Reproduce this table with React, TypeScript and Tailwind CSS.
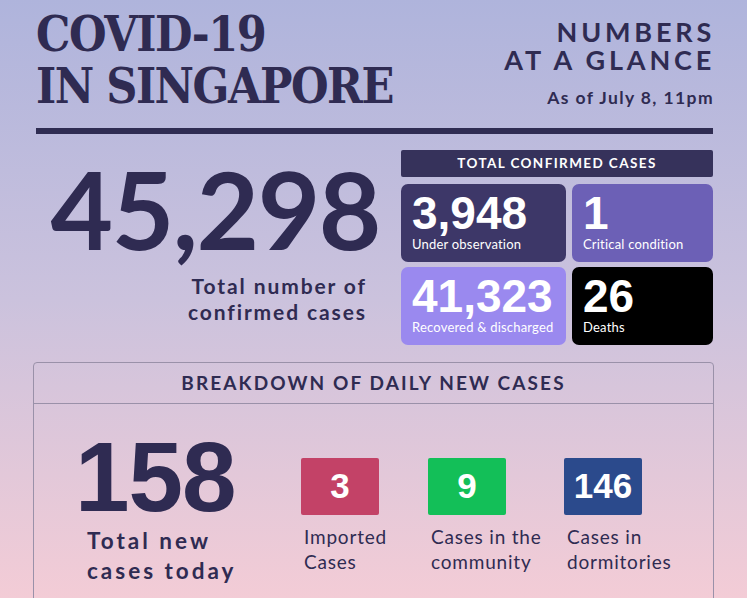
const cards = [
  { value: '3,948', label: 'Under observation', bg: 'bg-[#3d3768]' },
  { value: '1', label: 'Critical condition', bg: 'bg-[#6c60b6]' },
  { value: '41,323', label: 'Recovered & discharged', bg: 'bg-[#9a89ef]' },
  { value: '26', label: 'Deaths', bg: 'bg-black' },
];

const daily = [
  { value: '3', label: ['Imported', 'Cases'], bg: 'bg-[#c34267]', w: 'w-[127px]' },
  { value: '9', label: ['Cases in the', 'community'], bg: 'bg-[#13bf58]', w: 'w-[136px]' },
  { value: '146', label: ['Cases in', 'dormitories'], bg: 'bg-[#2b4a8c]', w: 'w-[120px]' },
];

export default function App() {
  return (
    // page with the soft purple-to-pink gradient
    <div className="w-[747px] h-[598px] overflow-hidden bg-gradient-to-b from-[#afb4dc] via-[#cbc2dd] to-[#f3ccd6] text-[#2f2b52] font-['Lato',sans-serif]">
      {/* header */}
      <div className="flex justify-between pl-[36px] pr-[34px] pt-[8px]">
        <h1 className="font-['DejaVu_Serif',serif] font-bold text-[48px] leading-[52px] [font-stretch:condensed] tracking-[-1.5px]">
          COVID-19
          <br />
          IN SINGAPORE
        </h1>
        <div className="flex flex-col items-end pt-[10px]">
          <div className="text-[27px] leading-[28px] font-bold tracking-[3.8px] text-right -mr-[2px]">
            NUMBERS
            <br />
            AT A GLANCE
          </div>
          <div className="text-[17.5px] font-bold tracking-[1.4px] mt-[11px] -mr-[1px]">As of July 8, 11pm</div>
        </div>
      </div>

      {/* divider */}
      <div className="ml-[36px] w-[677px] h-[6px] bg-[#2f2c52] mt-[16px]" />

      {/* totals */}
      <div className="flex ml-[36px] w-[677px] mt-[16px]">
        <div className="w-[365px] flex flex-col items-end">
          <div className="text-[108px] leading-[100px] font-bold mt-[8px] tracking-[-1.5px] mr-[21px]">45,298</div>
          <div className="text-[21px] leading-[26px] font-bold tracking-[1.9px] text-right mt-[15px] mr-[34px]">
            Total number of
            <br />
            confirmed cases
          </div>
        </div>
        <div className="w-[312px] flex flex-col">
          <div className="h-[27px] bg-[#36325b] rounded-[2px] text-white text-[13.5px] font-bold tracking-[1.4px] flex items-center justify-center">
            TOTAL CONFIRMED CASES
          </div>
          <div className="grid grid-cols-[165px_141px] gap-[5px_6px] mt-[7px]">
            {cards.map((c) => (
              <div key={c.label} className={`${c.bg} h-[78px] rounded-[7px] px-[11px] pt-[6px] text-white flex flex-col`}>
                <div className="font-['Liberation_Sans',sans-serif] font-bold text-[46px] leading-[46px]">{c.value}</div>
                <div className="text-[13px] leading-[16px] tracking-[0.2px] whitespace-nowrap">{c.label}</div>
              </div>
            ))}
          </div>
        </div>
      </div>

      {/* breakdown box */}
      <div className="ml-[33px] w-[681px] mt-[17px] border border-[#9a91a9] rounded-[4px] h-[260px]">
        <div className="h-[41px] border-b border-[#9a91a9] flex items-center justify-center text-[19px] font-bold tracking-[2.1px]">
          BREAKDOWN OF DAILY NEW CASES
        </div>
        <div className="flex items-start pl-[41px] pt-[24px]">
          <div className="w-[226px] flex flex-col items-start">
            <div className="font-['Liberation_Sans',sans-serif] font-bold text-[98px] leading-[98px] tracking-[-1px]">158</div>
            <div className="text-[22.5px] leading-[30px] font-bold tracking-[3px] ml-[12px]">
              Total new
              <br />
              cases today
            </div>
          </div>
          {daily.map((d) => (
            <div key={d.value} className={`${d.w} flex flex-col pt-[30px]`}>
              <div className={`${d.bg} w-[78px] h-[57px] rounded-[2px] flex items-center justify-center text-white font-['Liberation_Sans',sans-serif] font-bold text-[35px]`}>
                {d.value}
              </div>
              <div className="text-[19px] leading-[25px] tracking-[0.8px] mt-[9px] ml-[3px]">
                {d.label[0]}
                <br />
                {d.label[1]}
              </div>
            </div>
          ))}
        </div>
      </div>
    </div>
  );
}
